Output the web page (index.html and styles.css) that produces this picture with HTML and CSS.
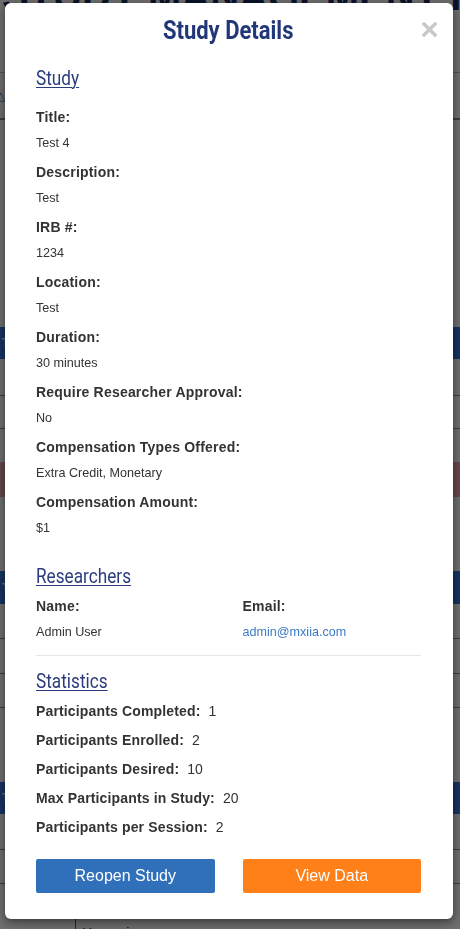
FILE: index.html
```html
<!DOCTYPE html>
<html lang="en">
<head>
<meta charset="utf-8">
<title>Study Details</title>
<link rel="stylesheet" href="styles.css">
</head>
<body>
<div class="page" aria-hidden="true">
  <div class="page-head"><span class="page-title">STUDY MANAGEMENT HUB</span></div>
  <div class="page-nav"><span class="nav-icon">&#9651;</span></div>
  <div class="page-space"></div>
  <div class="trow thead h32"><span class="cell">Title</span></div>
  <div class="trow h37 lined"></div>
  <div class="trow h33 lined"></div>
  <div class="trow h33"></div>
  <div class="trow danger h35"></div>
  <div class="trow h74"></div>
  <div class="trow thead h33"><span class="cell">Title</span></div>
  <div class="trow h35 lined"></div>
  <div class="trow h35 lined"></div>
  <div class="trow h34 lined"></div>
  <div class="trow h74"></div>
  <div class="trow thead h32"><span class="cell">Title</span></div>
  <div class="trow h36 lined"></div>
  <div class="trow h34 lined"></div>
  <div class="trow last"><span class="cell c1"></span><span class="cell c2">Upcoming</span></div>
</div>

<div class="backdrop"></div>

<div class="modal" role="dialog" aria-labelledby="mt">
  <header class="modal-header">
    <h2 class="modal-title" id="mt"><span class="cond">Study Details</span></h2>
  </header>
  <button class="close" aria-label="Close">
    <svg width="15" height="15" viewBox="0 0 15 15"><path d="M2 2 L13 13 M13 2 L2 13" stroke="#c8c8c8" stroke-width="3.4" stroke-linecap="square" fill="none"/></svg>
  </button>

  <section class="sect sect-study">
    <h3 class="sect-title"><span>Study</span></h3>
    <dl class="fields">
      <dt>Title:</dt><dd>Test 4</dd>
      <dt>Description:</dt><dd>Test</dd>
      <dt>IRB #:</dt><dd>1234</dd>
      <dt>Location:</dt><dd>Test</dd>
      <dt>Duration:</dt><dd>30 minutes</dd>
      <dt>Require Researcher Approval:</dt><dd>No</dd>
      <dt>Compensation Types Offered:</dt><dd>Extra Credit, Monetary</dd>
      <dt>Compensation Amount:</dt><dd>$1</dd>
    </dl>
  </section>

  <section class="sect sect-res">
    <h3 class="sect-title"><span>Researchers</span></h3>
    <div class="two-col">
      <div>
        <div class="lbl">Name:</div>
        <div class="val">Admin User</div>
      </div>
      <div>
        <div class="lbl">Email:</div>
        <div class="val"><a href="#" class="mail">admin@mxiia.com</a></div>
      </div>
    </div>
  </section>

  <hr class="divider">

  <section class="sect sect-stats">
    <h3 class="sect-title"><span>Statistics</span></h3>
    <ul class="stats">
      <li><b>Participants Completed:</b><span>1</span></li>
      <li><b>Participants Enrolled:</b><span>2</span></li>
      <li><b>Participants Desired:</b><span>10</span></li>
      <li><b>Max Participants in Study:</b><span>20</span></li>
      <li><b>Participants per Session:</b><span>2</span></li>
    </ul>
  </section>

  <div class="actions">
    <button class="btn btn-blue">Reopen Study</button>
    <button class="btn btn-orange">View Data</button>
  </div>
</div>
</body>
</html>
```

FILE: styles.css
```css
* { box-sizing: border-box; }
html, body { margin: 0; padding: 0; }
body {
  width: 460px;
  height: 929px;
  overflow: hidden;
  position: relative;
  background: #fff;
  color: #333;
  font-family: "Liberation Sans", Arial, sans-serif;
}

/* ---------- background page ---------- */
.page { width: 460px; }
.page-head {
  height: 73px;
  border-bottom: 1px solid #c2c2c2;
  overflow: hidden;
}
.page-title {
  display: block;
  margin-top: -24px;
  padding-left: 2px;
  font: 700 40px/40px "Liberation Sans", Arial, sans-serif;
  color: #1b2d63;
  white-space: nowrap;
}
.page-nav {
  height: 47px;
  border-bottom: 2px solid #8c8c8c;
  display: flex;
  align-items: center;
}
.nav-icon {
  margin-left: -4px;
  font-size: 12px;
  color: #3a6fc0;
}
.page-space { height: 207px; }
.trow { display: flex; }
.trow.lined { border-bottom: 1px solid #8c8c8c; }
.thead {
  background: #3377e0;
  color: #fff;
  font-size: 12px;
  font-weight: 700;
  align-items: center;
}
.thead .cell { padding-left: 2px; }
.danger { background: #eda7ac; }
.h32 { height: 32px; }
.h33 { height: 33px; }
.h34 { height: 34px; }
.h35 { height: 35px; }
.h36 { height: 36px; }
.h37 { height: 37px; }
.h74 { height: 74px; }
.trow.last { height: 45px; }
.trow.last .c1 { width: 76px; border-right: 1px solid #555; }
.trow.last .c2 { padding: 41px 0 0 6px; font-size: 14px; color: #222; }

.backdrop {
  position: fixed;
  inset: 0;
  background: rgba(0, 0, 0, 0.57);
}

/* ---------- modal ---------- */
.modal {
  position: absolute;
  top: 3px;
  left: 5px;
  width: 448px;
  padding: 13px 32px 26px 31px;
  background: #fff;
  border-radius: 6px;
  box-shadow: 0 3px 10px rgba(0, 0, 0, 0.5);
  display: flex;
  flex-direction: column;
}
.modal-header { text-align: center; }
.modal-title {
  margin: 0;
  font: 700 25px/30px Roboto, "Liberation Sans", sans-serif;
  color: #22377a;
}
.cond {
  display: inline-block;
  transform: scaleX(0.88);
}
.close {
  position: absolute;
  top: 19px;
  right: 16px;
  width: 15px;
  height: 15px;
  padding: 0;
  border: 0;
  background: none;
  display: block;
}
.close svg { display: block; }

.sect { display: flex; flex-direction: column; }
.sect-title {
  margin: 0;
  font: 400 20px/24px Roboto, "Liberation Sans", sans-serif;
  color: #2b3c7c;
}
.sect-title span {
  display: inline-block;
  transform: scaleX(0.86);
  transform-origin: 0 50%;
  text-decoration: underline;
  text-decoration-thickness: 1px;
  text-underline-offset: 2px;
}
.sect-study { margin-top: 20px; }
.sect-study .sect-title { margin-bottom: 17px; }
.sect-res { margin-top: 17px; }
.sect-res .sect-title, .sect-stats .sect-title { margin-bottom: 8px; }

.fields { margin: 0; }
.fields dt, .lbl {
  margin: 0 0 6px;
  font-size: 14px;
  line-height: 20px;
  font-weight: 700;
  letter-spacing: 0.2px;
  color: #333;
}
.fields dd, .val {
  margin: 0 0 9px;
  font-size: 12.6px;
  line-height: 20px;
  color: #333;
}
.val { margin-bottom: 0; }

.two-col {
  display: grid;
  grid-template-columns: 1fr 1fr;
  column-gap: 28px;
}
.mail { color: #3a7bc6; text-decoration: none; }

.divider {
  margin: 13px 0;
  border: 0;
  border-top: 1px solid #e6e6e6;
  height: 0;
}

.stats {
  list-style: none;
  margin: 0;
  padding: 0;
  display: flex;
  flex-direction: column;
  gap: 9px;
}
.stats li {
  font-size: 14px;
  line-height: 20px;
  color: #333;
}
.stats b { letter-spacing: 0.15px; }
.stats span { margin-left: 8px; }

.actions {
  margin-top: 22px;
  display: grid;
  grid-template-columns: 1fr 1fr;
  column-gap: 28px;
}
.btn {
  height: 34px;
  border: 0;
  border-radius: 2px;
  font: 400 16px/34px "Liberation Sans", Arial, sans-serif;
  color: #fff;
  padding: 0;
}
.btn-blue { background: #306fba; }
.btn-orange { background: #ff7f18; }
```
